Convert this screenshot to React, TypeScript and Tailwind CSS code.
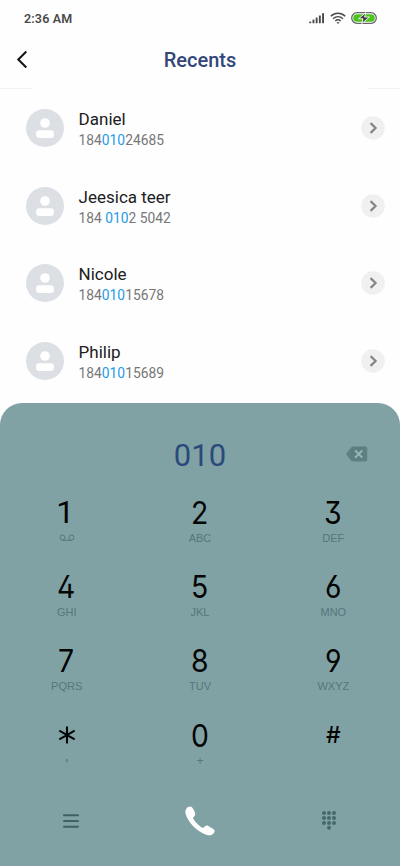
import type { ReactNode } from "react";

interface Contact {
  name: string;
  parts: [string, string, string];
}

interface Key {
  digit: string;
  label: ReactNode;
}

const contacts: Contact[] = [
  { name: "Daniel", parts: ["184", "010", "24685"] },
  { name: "Jeesica teer", parts: ["184 ", "010", "2 5042"] },
  { name: "Nicole", parts: ["184", "010", "15678"] },
  { name: "Philip", parts: ["184", "010", "15689"] },
];

function VoicemailIcon() {
  return (
    <svg width="16" height="8" viewBox="0 0 16 8" fill="none" stroke="currentColor" strokeWidth="1">
      <circle cx="3.5" cy="3.5" r="2.5" />
      <circle cx="12.5" cy="3.5" r="2.5" />
      <path d="M3.5 6.3h9" />
    </svg>
  );
}

const keys: Key[] = [
  { digit: "1", label: <VoicemailIcon /> },
  { digit: "2", label: "ABC" },
  { digit: "3", label: "DEF" },
  { digit: "4", label: "GHI" },
  { digit: "5", label: "JKL" },
  { digit: "6", label: "MNO" },
  { digit: "7", label: "PQRS" },
  { digit: "8", label: "TUV" },
  { digit: "9", label: "WXYZ" },
  { digit: "*", label: <span className="pb-2 font-bold">,</span> },
  { digit: "0", label: <span className="text-[12px] leading-none">+</span> },
  { digit: "#", label: "" },
];

function StatusBar() {
  return (
    <div className="flex h-9 items-center justify-between pl-6 pr-[23px] text-[#4a4a4a]">
      <span className="pt-[2px] text-[12.5px] font-semibold tracking-[0.15px]">2:36 AM</span>
      <div className="flex items-center">
        <svg width="16" height="12" viewBox="0 0 16 12" fill="currentColor">
          <rect x="0.3" y="9.4" width="1.9" height="1.9" rx="0.4" />
          <rect x="3.5" y="7.6" width="1.9" height="3.7" rx="0.4" />
          <rect x="6.7" y="5.6" width="1.9" height="5.7" rx="0.4" />
          <rect x="9.9" y="3.4" width="1.9" height="7.9" rx="0.4" />
          <rect x="13.1" y="1.1" width="1.9" height="10.2" rx="0.4" />
        </svg>
        <svg className="ml-[5px]" width="16" height="12" viewBox="0 0 16 12" fill="none" stroke="currentColor" strokeWidth="1.5">
          <path d="M0.8 4.3C4.9 0.3 11.1 0.3 15.2 4.3" />
          <path d="M3.1 6.7C6 4 10 4 12.9 6.7" />
          <path d="M5.3 9C6.9 7.6 9.1 7.6 10.7 9" />
          <path d="M6.4 10.3h3.2L8 12z" fill="currentColor" stroke="none" />
        </svg>
        <svg className="ml-[5px]" width="26" height="12" viewBox="0 0 26 12">
          <rect x="0.7" y="0.7" width="24.6" height="10.6" rx="5.3" fill="#fff" stroke="#666" strokeWidth="1.3" />
          <rect x="2.2" y="2.2" width="21.6" height="7.6" rx="3.8" fill="#4bc41c" />
          <path d="M14.8 0.6L7.6 6.8h4.4l-1.2 4.8 7.6-6.6h-4.8z" fill="#3c3c3c" stroke="#fff" strokeWidth="0.9" />
        </svg>
      </div>
    </div>
  );
}

function ContactRow({ contact }: { contact: Contact }) {
  const [before, match, after] = contact.parts;
  return (
    <div className="flex h-[77.75px] items-center pl-[26px] pr-[15px]">
      <svg width="38" height="38" viewBox="0 0 38 38">
        <circle cx="19" cy="19" r="19" fill="#dcdfe4" />
        <circle cx="19" cy="14" r="4.8" fill="#fff" />
        <rect x="10.1" y="21.2" width="17.8" height="7.8" rx="3.2" fill="#fff" />
      </svg>
      <div className="ml-[14.6px] flex-1 pt-[2px]">
        <p className="text-[17px] leading-[22px] text-[#202020]">{contact.name}</p>
        <p className="text-[13.8px] leading-[20px] whitespace-pre text-[#777]">
          {before}
          <span className="text-[#1e9be6]">{match}</span>
          {after}
        </p>
      </div>
      <svg width="24" height="24" viewBox="0 0 24 24">
        <circle cx="12" cy="12" r="11.8" fill="#f0f0f0" />
        <path d="M9.6 7.1l5 4.9-5 4.9" fill="none" stroke="#858585" strokeWidth="2.2" />
      </svg>
    </div>
  );
}

function KeySymbol({ digit }: { digit: string }) {
  if (digit === "*") {
    return (
      <span className="flex h-[38px] items-center justify-center">
        <svg width="18" height="18" viewBox="0 0 18 18" fill="none" stroke="#050505" strokeWidth="2.1">
          <path d="M9 0.5v17M1.3 4.7l15.4 8.6M16.7 4.7l-15.4 8.6" />
        </svg>
      </span>
    );
  }
  if (digit === "#") {
    return <span className="h-[38px] font-['Inter'] text-[23px] font-medium leading-[38px] text-[#050505]">#</span>;
  }
  if (digit === "1") {
    return <span className="h-[38px] pr-[3px] font-['Roboto'] text-[32px] leading-[38px] text-[#050505]">1</span>;
  }
  return (
    <span className="h-[38px] scale-x-90 pr-px font-['Inter'] text-[31.5px] leading-[39px] text-[#050505] [font-feature-settings:'cv02','cv03','cv04','cv09']">
      {digit}
    </span>
  );
}

function Keypad() {
  return (
    <div className="grid grid-cols-3">
      {keys.map((key) => (
        <button key={key.digit} className="flex h-[74.2px] flex-col items-center">
          <KeySymbol digit={key.digit} />
          <span className="flex h-[14px] items-center font-['Liberation_Sans'] text-[11px] leading-[14px] text-[#54777a]">
            {key.label}
          </span>
        </button>
      ))}
    </div>
  );
}

function ActionBar() {
  return (
    <div className="grid grid-cols-3 items-center">
      <div className="flex justify-center pl-2">
        <svg width="16" height="14" viewBox="0 0 16 14" fill="none" stroke="#41605f" strokeWidth="2" strokeLinecap="round">
          <path d="M1 1.3h14M1 7h14M1 12.7h14" />
        </svg>
      </div>
      <div className="flex justify-center">
        <svg width="30" height="30" viewBox="0 0 30 30" fill="#fff">
          <path d="M1.2 2.9C2.8 0.7 5.2 0 6.7 1.1C7.7 2.2 9.2 4.9 10.2 6.9C10.5 8.4 9.9 9.7 8.3 11.3C7.9 11.9 8.1 12.6 8.6 13.3C10.9 16.7 13.4 19.3 16.7 21.5C17.5 22 18.2 22 18.9 21.3C20.8 19.5 21.6 19.2 22.6 19.6L28.6 23.2C30 24.2 29.9 25.4 29 26.8C26.9 29.6 24.4 29.8 21.3 28.7C11.5 25.1 3.8 17 0.8 8.5C0.1 6.1 0.2 4.3 1.2 2.9Z" />
        </svg>
      </div>
      <div className="flex justify-center pr-2">
        <svg width="14" height="19" viewBox="0 0 14 19" fill="#45686a">
          {[2, 7, 12].map((x) =>
            [2, 7, 11.9].map((y) => <circle key={`${x}-${y}`} cx={x} cy={y} r="2" />)
          )}
          <circle cx="7" cy="16.8" r="2" />
        </svg>
      </div>
    </div>
  );
}

export default function App() {
  return (
    <div className="flex h-[866px] w-[400px] flex-col overflow-hidden bg-[#fefefe] font-['Roboto',sans-serif]">
      <StatusBar />
      <header className="grid h-12 grid-cols-3 items-center">
        <svg className="ml-4" width="13" height="18" viewBox="0 0 13 18" fill="none" stroke="#111" strokeWidth="2">
          <path d="M10.3 0.5L2.3 8.5l8 8" />
        </svg>
        <h1 className="text-center text-[20px] font-medium text-[#33467a]">Recents</h1>
      </header>
      <div className="flex h-[5px] items-end justify-between">
        <div className="h-px w-8 bg-[#f1f1f1]" />
        <div className="h-px w-8 bg-[#f1f1f1]" />
      </div>

      {/* Matching contacts */}
      <div className="h-[314px] shrink-0">
        {contacts.map((contact) => (
          <ContactRow key={contact.name} contact={contact} />
        ))}
      </div>

      {/* Dialer */}
      <div className="flex-1 rounded-t-[22px] bg-[#81a2a4]">
        <div className="grid h-[90px] grid-cols-3 items-center pt-3">
          <span className="col-start-2 pt-1 text-center text-[31px] text-[#2b4a7c]">010</span>
          <svg className="ml-[79px]" width="22" height="16" viewBox="0 0 22 16">
            <path d="M7 0.5h12.4a1.8 1.8 0 0 1 1.8 1.8v11.4a1.8 1.8 0 0 1-1.8 1.8H7c-.7 0-1.2-.3-1.6-.8L.7 9a1.5 1.5 0 0 1 0-2l4.7-5.7C5.8 .8 6.3 .5 7 .5z" fill="#5d7f80" />
            <path d="M9.1 4.4l7.2 7.2M16.3 4.4l-7.2 7.2" stroke="#9bb8b9" strokeWidth="1.9" />
          </svg>
        </div>
        <Keypad />
        <div className="pt-[16px]">
          <ActionBar />
        </div>
      </div>
    </div>
  );
}
